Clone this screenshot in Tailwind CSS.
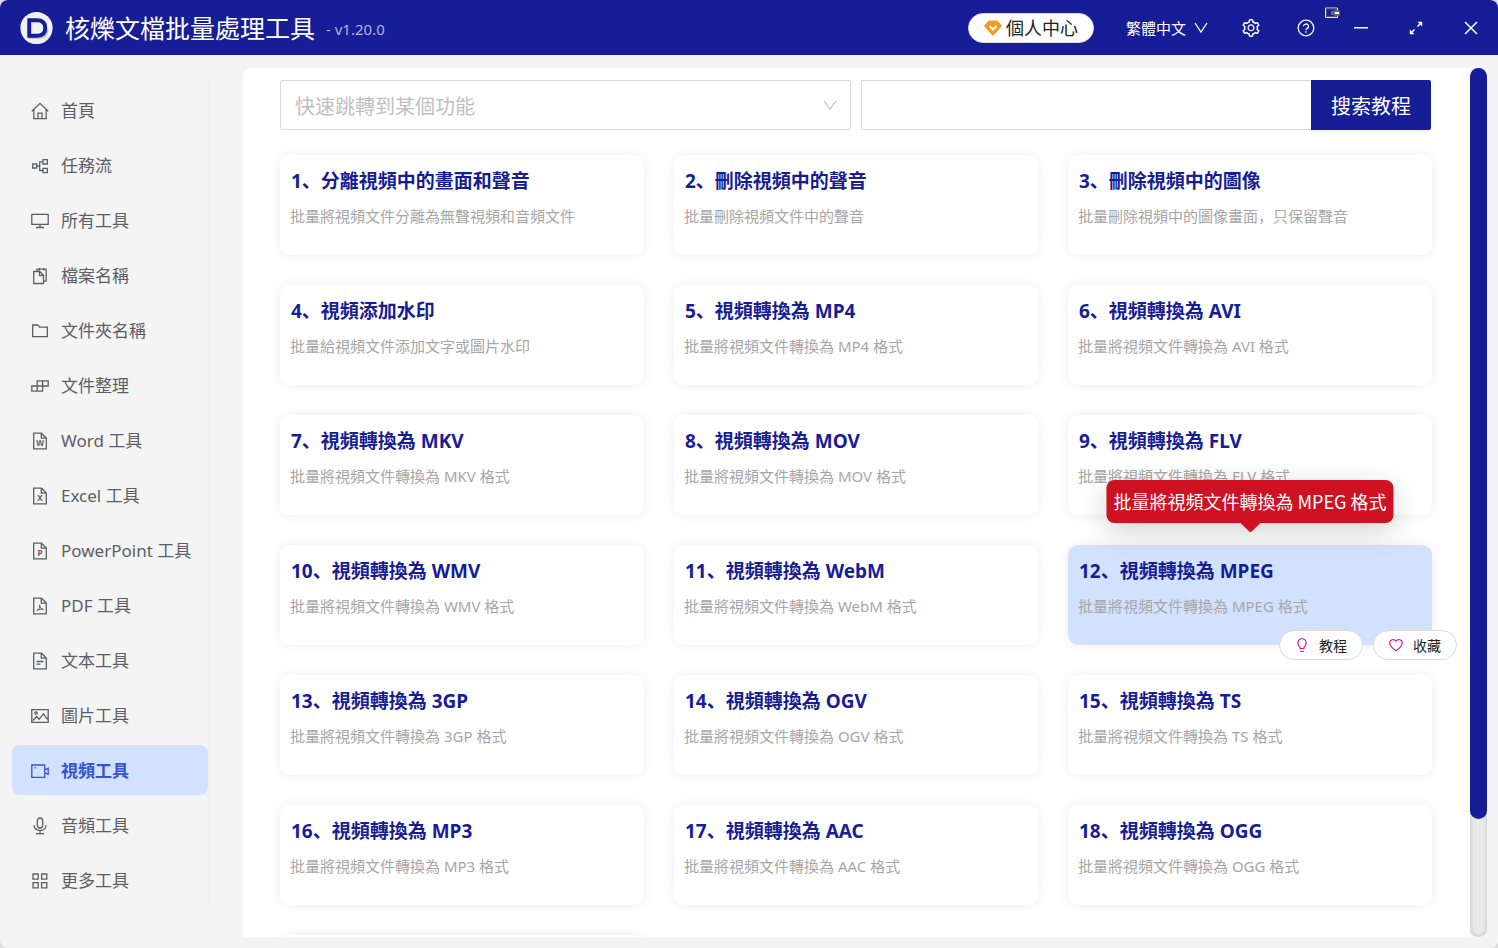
<!DOCTYPE html>
<html lang="zh" class="bg-[#dcdcdc]">
  <head>
    <meta charset="UTF-8" />
    <meta name="viewport" content="width=device-width, initial-scale=1.0" />
    <title>核爍文檔批量處理工具</title>
    <script src="https://cdn.jsdelivr.net/npm/@tailwindcss/browser@4"></script>
  </head>

  <body
    class="h-screen flex flex-col overflow-hidden rounded-lg bg-[#f4f4f4] font-['Noto_Sans','Noto_Sans_CJK_SC',sans-serif]"
  >
    <!-- Title bar -->
    <header class="h-[55px] shrink-0 flex items-center bg-[#171c97] text-white pl-5 pr-[18px]">
      <svg class="w-[33px] h-[34px] shrink-0" viewBox="0 0 34 34">
        <circle cx="17" cy="17" r="16.6" fill="#f1f1f1" />
        <path d="M10.5 12v14.5h8.5c6 0 9-3.5 9-8.5" fill="none" stroke="#b9b9bd" stroke-width="3" />
        <path d="M9.5 9h8c5.5 0 8.5 3 8.5 8s-3 8-8.5 8h-8z" fill="#f1f1f1" stroke="#171c97" stroke-width="4" />
        <path d="M12 23V11.5h6" fill="none" stroke="#b9b9bd" stroke-width="1" />
      </svg>
      <h1 class="ml-3 text-[25px] leading-8 whitespace-nowrap">核爍文檔批量處理工具</h1>
      <span class="ml-[11px] mt-1 text-[15px] text-[#b3b5dc] whitespace-nowrap">- v1.20.0</span>

      <button class="ml-auto h-[30px] px-[15px] flex items-center gap-1 rounded-full border border-[#d9d9d9] bg-white text-[#222] text-[18px] leading-6 whitespace-nowrap">
        <svg class="w-[18px] h-[18px]" viewBox="0 0 18 18">
          <path d="M4.5 2h9L17.5 7 9 16.5.5 7z" fill="#f79a1f" stroke="#f79a1f" stroke-linejoin="round" />
          <path d="M5.5 7L9 10.5 12.5 7" fill="none" stroke="#fff" stroke-width="2" />
        </svg>
        個人中心
      </button>
      <button class="ml-8 flex items-center gap-2 pt-px text-[15px] whitespace-nowrap">
        繁體中文
        <svg class="w-[14px] h-[14px]" viewBox="0 0 14 14" fill="none" stroke="#fff" stroke-width="1.3"><path d="M1 2l6 9 6-9" /></svg>
      </button>
      <button class="ml-[34px]" aria-label="設置">
        <svg class="w-[18px] h-[18px]" viewBox="64 64 896 896" fill="#fff"><path d="M924.8 625.7l-65.5-56c3.1-19 4.7-38.4 4.7-57.8s-1.6-38.8-4.7-57.8l65.5-56a32.03 32.03 0 009.3-35.2l-.9-2.6a443.74 443.74 0 00-79.7-137.9l-1.8-2.1a32.12 32.12 0 00-35.1-9.5l-81.3 28.9c-30-24.6-63.5-44-99.7-57.6l-15.7-85a32.05 32.05 0 00-25.8-25.7l-2.7-.5c-52.1-9.4-106.9-9.4-159 0l-2.7.5a32.05 32.05 0 00-25.8 25.7l-15.8 85.4a351.86 351.86 0 00-99 57.4l-81.9-29.1a32 32 0 00-35.1 9.5l-1.8 2.1a446.02 446.02 0 00-79.7 137.9l-.9 2.6c-4.5 12.5-.8 26.5 9.3 35.2l66.3 56.6c-3.1 18.8-4.6 38-4.6 57.1 0 19.2 1.5 38.4 4.6 57.1L99 625.5a32.03 32.03 0 00-9.3 35.2l.9 2.6c18.1 50.4 44.9 96.9 79.7 137.9l1.8 2.1a32.12 32.12 0 0035.1 9.5l81.9-29.1c29.8 24.5 63.1 43.9 99 57.4l15.8 85.4a32.05 32.05 0 0025.8 25.7l2.7.5a449.4 449.4 0 00159 0l2.7-.5a32.05 32.05 0 0025.8-25.7l15.7-85a350 350 0 0099.7-57.6l81.3 28.9a32 32 0 0035.1-9.5l1.8-2.1c34.8-41.1 61.6-87.5 79.7-137.9l.9-2.6c4.5-12.3.8-26.3-9.3-35zM788.3 465.9c2.5 15.1 3.8 30.6 3.8 46.1s-1.3 31-3.8 46.1l-6.6 40.1 74.7 63.9a370.03 370.03 0 01-42.6 73.6L721 702.8l-31.4 25.8c-23.9 19.6-50.5 35-79.3 45.8l-38.1 14.3-17.9 97a377.5 377.5 0 01-85 0l-17.9-97.2-37.8-14.5c-28.5-10.8-55-26.2-78.7-45.7l-31.4-25.9-93.4 33.2c-17-22.9-31.2-47.6-42.6-73.6l75.5-64.5-6.5-40c-2.4-14.9-3.7-30.3-3.7-45.5 0-15.3 1.2-30.6 3.7-45.5l6.5-40-75.5-64.5c11.3-26.1 25.6-50.7 42.6-73.6l93.4 33.2 31.4-25.9c23.7-19.5 50.2-34.9 78.7-45.7l37.9-14.3 17.9-97.2c28.1-3.2 56.8-3.2 85 0l17.9 97 38.1 14.3c28.7 10.8 55.4 26.2 79.3 45.8l31.4 25.8 92.8-32.9c17 22.9 31.2 47.6 42.6 73.6L781.8 426l6.5 39.9zM512 326c-97.2 0-176 78.8-176 176s78.8 176 176 176 176-78.8 176-176-78.8-176-176-176zm79.2 255.2A111.6 111.6 0 01512 614c-29.9 0-58-11.7-79.2-32.8A111.6 111.6 0 01400 502c0-29.9 11.7-58 32.8-79.2C454 401.6 482.1 390 512 390c29.9 0 58 11.6 79.2 32.8A111.6 111.6 0 01624 502c0 29.9-11.7 58-32.8 79.2z" /></svg>
      </button>
      <div class="relative ml-[37px] flex">
        <button aria-label="幫助">
          <svg class="w-[18px] h-[18px]" viewBox="0 0 18 18" fill="none" stroke="#fff" stroke-width="1.3">
            <circle cx="9" cy="9" r="7.8" />
            <path d="M6.5 7.3a2.5 2.3 0 1 1 3.6 2.1Q9 10 9 11.3" />
            <path d="M9 12.3v1.5" />
          </svg>
        </button>
        <svg class="absolute left-[28px] -top-[12px] w-4 h-3" viewBox="0 0 16 12">
          <path d="M.5 1h12v9.5H.5z" fill="#171c97" stroke="#e6e3cf" />
          <path d="M1.5 2h10v7.5h-10z" fill="none" stroke="#555" />
          <path d="M6 4h3v4H6z" fill="#6065a5" />
          <rect x="8.5" y="3" width="6.5" height="6" rx="1.5" fill="#666" />
          <path d="M10 5h4v2h-4z" fill="#fff" />
        </svg>
      </div>
      <button class="ml-[37px]" aria-label="最小化">
        <svg class="w-[18px] h-[18px]" viewBox="0 0 18 18" fill="none" stroke="#fff" stroke-width="1.4"><path d="M2 8.7h14" /></svg>
      </button>
      <button class="ml-[37px]" aria-label="最大化">
        <svg class="w-[18px] h-[18px]" viewBox="0 0 18 18" fill="#fff" stroke="#fff">
          <path d="M10.5 7.5l4-4M7.5 10.5l-4 4" stroke-width="1.5" />
          <path d="M11 3h4v4zM3 11v4h4z" stroke-width=".6" />
        </svg>
      </button>
      <button class="ml-[37px]" aria-label="關閉">
        <svg class="w-[18px] h-[18px]" viewBox="0 0 18 18" fill="none" stroke="#fff" stroke-width="1.5"><path d="M3 3l12 12M15 3L3 15" /></svg>
      </button>
    </header>

    <div class="flex-1 min-h-0 flex">
      <!-- Side menu -->
      <nav class="w-[209px] shrink-0 mt-[25px] mb-10 border-r border-[#eeeeee] pl-3 pt-[5px] flex flex-col gap-[5px] text-[17px] leading-6 text-[#5c5d66] whitespace-nowrap">
        <a href="#" class="h-[50px] shrink-0 flex items-center gap-3 pt-px pl-[19px]">
          <svg class="w-[18px] h-[18px]" viewBox="0 0 18 18" fill="none" stroke="currentColor" stroke-width="1.3"><path d="M.8 9.3L9 1.3l8.2 8M2.8 8v8.7h12.4V8M7 16.7v-5.5h4v5.5" /></svg>
          首頁
        </a>
        <a href="#" class="h-[50px] shrink-0 flex items-center gap-3 pt-px pl-[19px]">
          <svg class="w-[18px] h-[18px]" viewBox="0 0 18 18" fill="none" stroke="currentColor" stroke-width="1.3"><path d="M1.7 7h4v4h-4zM12 2.7h4.3V7H12zM12 11.3h4.3v4.3H12zM5.7 9h3M12 4.9H8.7v8.6H12" /></svg>
          任務流
        </a>
        <a href="#" class="h-[50px] shrink-0 flex items-center gap-3 pt-px pl-[19px]">
          <svg class="w-[18px] h-[18px]" viewBox="0 0 18 18" fill="none" stroke="currentColor" stroke-width="1.3"><path d="M.8 2.3h16.4v10H.8zM9 12.3v3.2M5 15.5h8" /></svg>
          所有工具
        </a>
        <a href="#" class="h-[50px] shrink-0 flex items-center gap-3 pt-px pl-[19px]">
          <svg class="w-[18px] h-[18px]" viewBox="0 0 18 18" fill="none" stroke="currentColor" stroke-width="1.3"><path d="M2.7 4.5h6l3.8 3.8v8.2H2.7zM8.5 4.5v4h4M6 4.5V2.2h9.2v12h-2.7M8.5 1v2.5M12.5 1v2.5" /></svg>
          檔案名稱
        </a>
        <a href="#" class="h-[50px] shrink-0 flex items-center gap-3 pt-px pl-[19px]">
          <svg class="w-[18px] h-[18px]" viewBox="0 0 18 18" fill="none" stroke="currentColor" stroke-width="1.3"><path d="M1.7 3h5l2 2.2h7.6v9.5H1.7z" /></svg>
          文件夾名稱
        </a>
        <a href="#" class="h-[50px] shrink-0 flex items-center gap-3 pt-px pl-[19px]">
          <svg class="w-[18px] h-[18px]" viewBox="0 0 18 18" fill="none" stroke="currentColor" stroke-width="1.3"><path d="M.8 9h10.8v5.2H.8zM6.2 3.8h11V9h-11zM6.2 9v5.2M11.6 3.8V9" /></svg>
          文件整理
        </a>
        <a href="#" class="h-[50px] shrink-0 flex items-center gap-3 pt-px pl-[19px]">
          <svg class="w-[18px] h-[18px]" viewBox="0 0 18 18" fill="none" stroke="currentColor" stroke-width="1.3"><path d="M2.7 1.2h7.8l4.8 4.8v10.8H2.7zM10.3 1.2v5h5" /><text x="9" y="14" font-size="8" font-weight="700" text-anchor="middle" fill="currentColor" stroke="none">W</text></svg>
          Word 工具
        </a>
        <a href="#" class="h-[50px] shrink-0 flex items-center gap-3 pt-px pl-[19px]">
          <svg class="w-[18px] h-[18px]" viewBox="0 0 18 18" fill="none" stroke="currentColor" stroke-width="1.3"><path d="M2.7 1.2h7.8l4.8 4.8v10.8H2.7zM10.3 1.2v5h5" /><text x="9" y="14" font-size="8" font-weight="700" text-anchor="middle" fill="currentColor" stroke="none">X</text></svg>
          Excel 工具
        </a>
        <a href="#" class="h-[50px] shrink-0 flex items-center gap-3 pt-px pl-[19px]">
          <svg class="w-[18px] h-[18px]" viewBox="0 0 18 18" fill="none" stroke="currentColor" stroke-width="1.3"><path d="M2.7 1.2h7.8l4.8 4.8v10.8H2.7zM10.3 1.2v5h5" /><text x="9" y="14" font-size="8" font-weight="700" text-anchor="middle" fill="currentColor" stroke="none">P</text></svg>
          PowerPoint 工具
        </a>
        <a href="#" class="h-[50px] shrink-0 flex items-center gap-3 pt-px pl-[19px]">
          <svg class="w-[18px] h-[18px]" viewBox="0 0 18 18" fill="none" stroke="currentColor" stroke-width="1.3"><path d="M2.7 1.2h7.8l4.8 4.8v10.8H2.7zM10.3 1.2v5h5" /><path d="M8.6 7.8c.6 2.5-.8 5-2.8 5.9M8.6 8c.2 2.6 1.8 4.6 3.8 4.3-2-.6-4.6.2-6.4 1.2" stroke-width="1" /></svg>
          PDF 工具
        </a>
        <a href="#" class="h-[50px] shrink-0 flex items-center gap-3 pt-px pl-[19px]">
          <svg class="w-[18px] h-[18px]" viewBox="0 0 18 18" fill="none" stroke="currentColor" stroke-width="1.3"><path d="M2.7 1.2h7.8l4.8 4.8v10.8H2.7zM10.3 1.2v5h5M5.5 9.5h7M5.5 12.2h3.8" /></svg>
          文本工具
        </a>
        <a href="#" class="h-[50px] shrink-0 flex items-center gap-3 pt-px pl-[19px]">
          <svg class="w-[18px] h-[18px]" viewBox="0 0 18 18" fill="none" stroke="currentColor" stroke-width="1.3"><path d="M.8 2.7h16.4v12.6H.8zM2 13.5l3.5-4 2.5 2.8 4.5-5.5 4 5.5" /><circle cx="5" cy="6" r="1.2" /></svg>
          圖片工具
        </a>
        <a href="#" class="h-[50px] shrink-0 flex items-center gap-3 pt-px pl-[19px] rounded-lg bg-[#d2e2fe] text-[#3553d3] font-bold">
          <svg class="w-[18px] h-[18px]" viewBox="0 0 18 18" fill="none" stroke="currentColor" stroke-width="1.3"><path d="M.8 3h12.9v12.3H.8zM13.7 7.8l3.5-1.5v6l-3.5-1.5" /><path d="M3.2 5.7h2" stroke="#4b9cf5" stroke-width="1.5" /></svg>
          視頻工具
        </a>
        <a href="#" class="h-[50px] shrink-0 flex items-center gap-3 pt-px pl-[19px]">
          <svg class="w-[18px] h-[18px]" viewBox="0 0 18 18" fill="none" stroke="currentColor" stroke-width="1.3"><rect x="6.3" y="1" width="5.4" height="10" rx="2.7" /><path d="M3 8.2c0 7 12 7 12 0M9 13.3v3.4M5 16.7h8" /></svg>
          音頻工具
        </a>
        <a href="#" class="h-[50px] shrink-0 flex items-center gap-3 pt-px pl-[19px]">
          <svg class="w-[18px] h-[18px]" viewBox="0 0 18 18" fill="none" stroke="currentColor" stroke-width="1.3"><path d="M2 2h5.2v5.2H2zM10.6 2h5.2v5.2h-5.2zM2 10.6h5.2v5.2H2zM10.6 10.6h5.2v5.2h-5.2z" /></svg>
          更多工具
        </a>
      </nav>

      <main class="flex-1 min-w-0 ml-[34px] mt-[13px] mb-[11px] pl-[37px] pr-[38px] pt-3 overflow-hidden rounded-tl-lg bg-white">
        <div class="flex gap-[10px] mr-px mb-[25px]">
          <div class="relative flex-1">
            <select aria-label="快速跳轉到某個功能" class="w-full h-[50px] px-[14px] pt-1 appearance-none rounded-xs border border-[#d9d9d9] bg-white text-[20px] text-[#bfbfbf]">
              <option>快速跳轉到某個功能</option>
            </select>
            <svg class="absolute right-[14px] top-[18px] w-[14px] h-[14px] pointer-events-none" viewBox="0 0 14 14" fill="none" stroke="#bfbfbf" stroke-width="1.2"><path d="M1 3l6 8 6-8" /></svg>
          </div>
          <form class="flex-1 flex">
            <input type="text" aria-label="搜索教程" class="flex-1 min-w-0 h-[50px] px-3 rounded-l-xs border border-r-0 border-[#d9d9d9] text-[20px]" />
            <button type="button" class="w-[120px] h-[50px] pt-1 rounded-r-xs bg-[#171c97] text-white text-[20px] shadow-[0_2px_0_rgba(0,0,0,0.04)]">搜索教程</button>
          </form>
        </div>

        <div id="lista" class="grid grid-cols-3 gap-[30px]"></div>
      </main>

      <!-- Scrollbar -->
      <div class="w-[17px] shrink-0 mt-[13px] mb-[11px] mr-[11px] rounded-full bg-[#e9e9e9] shadow-[inset_0_0_4px_rgba(0,0,0,0.2)]">
        <div class="rounded-full bg-[#171c97]" style="height: 86.4%"></div>
      </div>
    </div>

    <script>
      const tools = [
        ["分離視頻中的畫面和聲音", "批量將視頻文件分離為無聲視頻和音頻文件"],
        ["刪除視頻中的聲音", "批量刪除視頻文件中的聲音"],
        ["刪除視頻中的圖像", "批量刪除視頻中的圖像畫面，只保留聲音"],
        ["視頻添加水印", "批量給視頻文件添加文字或圖片水印"],
      ];
      const formats = ["MP4", "AVI", "MKV", "MOV", "FLV", "WMV", "WebM", "MPEG", "3GP", "OGV", "TS", "MP3", "AAC", "OGG"];
      formats.forEach((f) => tools.push([`視頻轉換為 ${f}`, `批量將視頻文件轉換為 ${f} 格式`]));

      const active = 12;

      // tooltip and action buttons shown on the hovered card
      const extras = (text) => `
        <div role="tooltip" class="absolute left-1/2 -translate-x-1/2 bottom-[122px] h-[43px] px-[7px] flex items-center rounded-lg bg-[#cf1124] text-white text-[18px] whitespace-nowrap shadow-[0_8px_30px_rgba(0,0,0,0.18)] font-['Noto_Sans_CJK_SC',sans-serif]">
          ${text}
          <svg class="absolute left-1/2 -translate-x-1/2 top-full w-5 h-[9px]" viewBox="0 0 20 9"><path d="M0 0h20l-8.5 8.3q-1.5 1.2-3 0z" fill="#cf1124" /></svg>
        </div>
        <div class="absolute -right-[25px] -bottom-[15px] flex gap-[10px] text-[14px] text-[#222]">
          <button class="w-[84px] h-[30px] flex items-center justify-center gap-[10px] rounded-full border border-[#d9d9d9] bg-white">
            <svg class="w-[14px] h-[14px]" viewBox="0 0 14 14" fill="none" stroke="#c41d9c" stroke-width="1.1"><path d="M5 10.5V9C1.5 6.5 2.5.8 7 .8s5.5 5.7 2 8.2v1.5zM5 13.2h4" /></svg>
            教程
          </button>
          <button class="w-[84px] h-[30px] flex items-center justify-center gap-[10px] rounded-full border border-[#d9d9d9] bg-white">
            <svg class="w-[14px] h-[14px]" viewBox="0 0 14 14" fill="none" stroke="#c41d9c" stroke-width="1.1"><path d="M7 12.8C3 10 .7 7.5.7 5 .7 1.5 5.5.5 7 3.3 8.5.5 13.3 1.5 13.3 5c0 2.5-2.3 5-6.3 7.8z" /></svg>
            收藏
          </button>
        </div>`;

      const cards = tools.map(([title, text], i) => {
        const on = i + 1 === active;
        return `
          <article class="relative h-[100px] px-[10px] pt-3 rounded-[10px] shadow-[0_0_14px_rgba(0,0,0,0.07)] ${on ? "z-10 bg-[#d2e2fe]" : "bg-white"}">
            <h2 class="pl-px text-[19px] leading-7 font-bold text-[#171c97] whitespace-nowrap">${i + 1}、${title}</h2>
            <p class="mt-[9px] text-[15px] leading-6 text-[#a6a6a6] whitespace-nowrap">${text}</p>
            ${on ? extras(text) : ""}
          </article>`;
      });

      // placeholder for the next row
      cards.push(`<article class="h-[100px] rounded-[10px] bg-white shadow-[0_0_14px_rgba(0,0,0,0.07)]"></article>`);

      document.getElementById("lista").innerHTML = cards.join("");
    </script>
  </body>
</html>
